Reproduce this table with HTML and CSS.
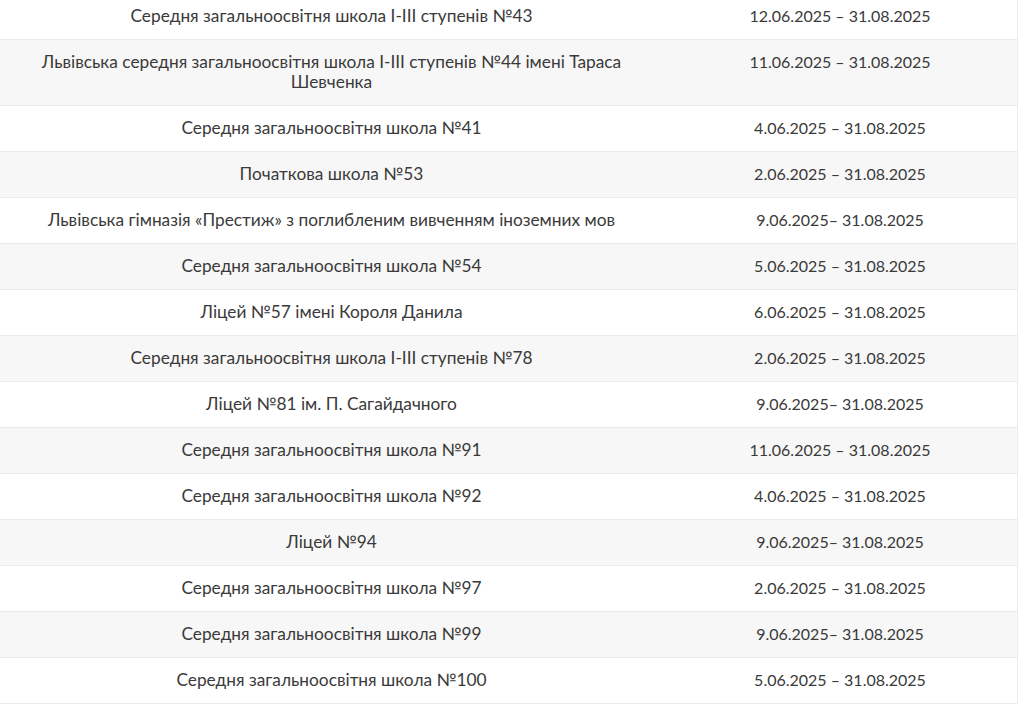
FILE: index.html
```html
<!DOCTYPE html>
<html lang="uk">
<head>
<meta charset="utf-8">
<link rel="stylesheet" href="styles.css">
</head>
<body>
<div class="wrap">
<table class="schools">
<tbody>
<tr><td>Середня загальноосвітня школа І-ІІІ ступенів №43</td><td>12.06.2025 – 31.08.2025</td></tr>
<tr><td>Львівська середня загальноосвітня школа І-ІІІ ступенів №44 імені Тараса Шевченка</td><td>11.06.2025 – 31.08.2025</td></tr>
<tr><td>Середня загальноосвітня школа №41</td><td>4.06.2025 – 31.08.2025</td></tr>
<tr><td>Початкова школа №53</td><td>2.06.2025 – 31.08.2025</td></tr>
<tr><td>Львівська гімназія «Престиж» з поглибленим вивченням іноземних мов</td><td>9.06.2025– 31.08.2025</td></tr>
<tr><td>Середня загальноосвітня школа №54</td><td>5.06.2025 – 31.08.2025</td></tr>
<tr><td>Ліцей №57 імені Короля Данила</td><td>6.06.2025 – 31.08.2025</td></tr>
<tr><td>Середня загальноосвітня школа І-ІІІ ступенів №78</td><td>2.06.2025 – 31.08.2025</td></tr>
<tr><td>Ліцей №81 ім. П. Сагайдачного</td><td>9.06.2025– 31.08.2025</td></tr>
<tr><td>Середня загальноосвітня школа №91</td><td>11.06.2025 – 31.08.2025</td></tr>
<tr><td>Середня загальноосвітня школа №92</td><td>4.06.2025 – 31.08.2025</td></tr>
<tr><td>Ліцей №94</td><td>9.06.2025– 31.08.2025</td></tr>
<tr><td>Середня загальноосвітня школа №97</td><td>2.06.2025 – 31.08.2025</td></tr>
<tr><td>Середня загальноосвітня школа №99</td><td>9.06.2025– 31.08.2025</td></tr>
<tr><td>Середня загальноосвітня школа №100</td><td>5.06.2025 – 31.08.2025</td></tr>
</tbody>
</table>
</div>
</body>
</html>
```
FILE: styles.css
```css
html, body {
  margin: 0;
  padding: 0;
  background: #fff;
}
body {
  font-family: Lato, "Liberation Sans", sans-serif;
  font-size: 16px;
  color: #3a3a3a;
  overflow: hidden;
}
.wrap {
  width: 1018px;
  margin-top: -7px;
  border-right: 1px solid #eee;
  box-sizing: border-box;
}
.schools {
  width: 100%;
  border-collapse: collapse;
  table-layout: fixed;
}
.schools td {
  padding: 12px 8px 13px;
  line-height: 20px;
  text-align: center;
  vertical-align: top;
  border-top: 1px solid #ebebeb;
}
.schools tr:last-child td {
  border-bottom: 1px solid #ebebeb;
}
.schools td:first-child {
  width: 647px;
  font-size: 17.3px;
}
.schools tr:nth-child(even) td {
  background: #f7f7f7;
}
```
